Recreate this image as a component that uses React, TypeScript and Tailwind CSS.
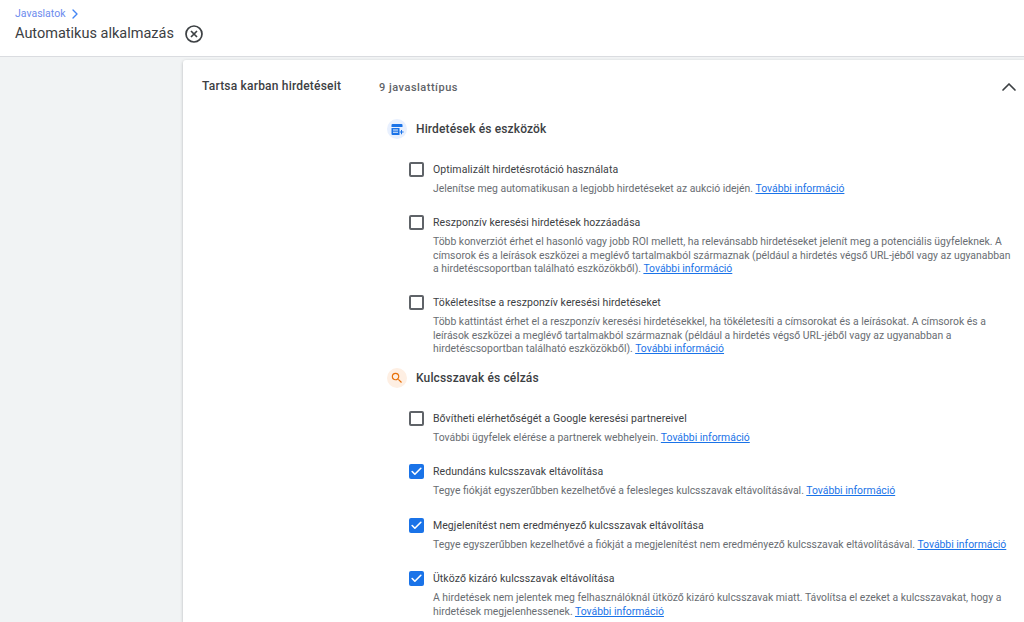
import { ChevronRight, ChevronUp, Check } from "lucide-react";

type Suggestion = {
  title: string;
  desc: string;
  checked?: boolean;
};

const adsItems: Suggestion[] = [
  {
    title: "Optimalizált hirdetésrotáció használata",
    desc: "Jelenítse meg automatikusan a legjobb hirdetéseket az aukció idején.",
  },
  {
    title: "Reszponzív keresési hirdetések hozzáadása",
    desc: "Több konverziót érhet el hasonló vagy jobb ROI mellett, ha relevánsabb hirdetéseket jelenít meg a potenciális ügyfeleknek. A címsorok és a leírások eszközei a meglévő tartalmakból származnak (például a hirdetés végső URL-jéből vagy az ugyanabban a hirdetéscsoportban található eszközökből).",
  },
  {
    title: "Tökéletesítse a reszponzív keresési hirdetéseket",
    desc: "Több kattintást érhet el a reszponzív keresési hirdetésekkel, ha tökéletesíti a címsorokat és a leírásokat. A címsorok és a leírások eszközei a meglévő tartalmakból származnak (például a hirdetés végső URL-jéből vagy az ugyanabban a hirdetéscsoportban található eszközökből).",
  },
];

const keywordItems: Suggestion[] = [
  {
    title: "Bővítheti elérhetőségét a Google keresési partnereivel",
    desc: "További ügyfelek elérése a partnerek webhelyein.",
  },
  {
    title: "Redundáns kulcsszavak eltávolítása",
    desc: "Tegye fiókját egyszerűbben kezelhetővé a felesleges kulcsszavak eltávolításával.",
    checked: true,
  },
  {
    title: "Megjelenítést nem eredményező kulcsszavak eltávolítása",
    desc: "Tegye egyszerűbben kezelhetővé a fiókját a megjelenítést nem eredményező kulcsszavak eltávolításával.",
    checked: true,
  },
  {
    title: "Ütköző kizáró kulcsszavak eltávolítása",
    desc: "A hirdetések nem jelentek meg felhasználóknál ütköző kizáró kulcsszavak miatt. Távolítsa el ezeket a kulcsszavakat, hogy a hirdetések megjelenhessenek.",
    checked: true,
  },
];

function SuggestionRow({ item }: { item: Suggestion }) {
  return (
    <div className="flex">
      {item.checked ? (
        <div className="flex h-[15px] w-[15px] shrink-0 items-center justify-center rounded-[2px] bg-[#1a73e8]">
          <Check size={13} strokeWidth={3} className="text-white" />
        </div>
      ) : (
        <div className="h-[15px] w-[15px] shrink-0 rounded-[2px] border-2 border-[#5f6368]" />
      )}
      <div className="ml-[9px] min-w-0 flex-1">
        <div className="h-[20px] text-[10.5px] leading-[16px] tracking-[0.065px] text-[#3c4043]">
          {item.title}
        </div>
        <div className="text-[10.4px] leading-[13.5px] text-[#696d72]">
          {item.desc}{" "}
          <a className="text-[#1a73e8] underline">További információ</a>
        </div>
      </div>
    </div>
  );
}

function SectionHeader({ title, kind }: { title: string; kind: "ads" | "keywords" }) {
  return (
    <div className="flex h-[20px] items-center">
      <div
        className={`flex h-[20px] w-[20px] items-center justify-center rounded-full ${
          kind === "ads" ? "bg-[#e8f0fe]" : "bg-[#feefe3]"
        }`}
      >
        {kind === "ads" ? (
          <svg width="13" height="13" viewBox="0 0 13 13" fill="#1a73e8">
            <path d="M1.5 1h9a1 1 0 0 1 1 1v2h-11V2a1 1 0 0 1 1-1z" />
            <path
              fillRule="evenodd"
              d="M.5 5h8v7h-7a1 1 0 0 1-1-1zM2 6.5v1h5v-1zM2 8.8v1h5v-1z"
            />
            <path d="M10 7h1v1.6h1.6v1H11v1.6h-1V9.6H8.8v-1H10z" />
          </svg>
        ) : (
          <svg width="14" height="14" viewBox="0 0 24 24" fill="#e8710a">
            <path d="M15.5 14h-.79l-.28-.27A6.471 6.471 0 0 0 16 9.5 6.5 6.5 0 1 0 9.5 16c1.61 0 3.09-.59 4.23-1.57l.27.28v.79l5 4.99L20.49 19l-4.99-5zm-6 0C7.01 14 5 11.99 5 9.5S7.01 5 9.5 5 14 7.01 14 9.5 11.99 14 9.5 14z" />
          </svg>
        )}
      </div>
      <div className="ml-[9px] text-[12px] font-medium tracking-[0.14px] text-[#3c4043]">{title}</div>
    </div>
  );
}

export default function App() {
  return (
    <div className="flex h-[622px] w-[1024px] flex-col overflow-hidden bg-[#f1f3f4] font-['Roboto',sans-serif]">
      <header className="h-[57px] shrink-0 border-b border-[#dadce0] bg-white pl-[15px] pt-[7px]">
        <div className="flex h-[13px] items-center text-[10.5px] text-[#6c8bee]">
          Javaslatok
          <ChevronRight size={16} strokeWidth={2} className="ml-[2px] text-[#4285f4]" />
        </div>
        <div className="mt-[4px] flex h-[20px] items-center text-[14.5px] text-[#3c4043]">
          Automatikus alkalmazás
          <svg width="18" height="18" viewBox="0 0 18 18" fill="none" stroke="#3c4043" strokeWidth="1.7" className="ml-[11px]">
            <circle cx="9" cy="9" r="8" />
            <path d="M6 6l6 6M12 6l-6 6" />
          </svg>
        </div>
      </header>
      <div className="flex flex-1 pl-[183px] pt-[3px]">
        <main className="flex flex-1 rounded-tl-[3px] bg-white pt-[18px] shadow-[0_1px_3px_rgba(60,64,67,0.35)]">
          <div className="w-[196px] shrink-0 pl-[19px] text-[12px] font-medium leading-[16px] tracking-[0.2px] text-[#3c4043]">
            Tartsa karban hirdetéseit
          </div>
          <div className="min-w-0 flex-1 pt-[2px]">
            <div className="flex h-[16px] items-center justify-between pr-[3px] text-[11px] font-medium tracking-[0.5px] text-[#5f6368]">
              9 javaslattípus
              <ChevronUp size={24} strokeWidth={1.7} className="-mt-[2px] text-[#3c4043]" />
            </div>
            <div className="pl-[8px] pt-[23px]">
              <SectionHeader title="Hirdetések és eszközök" kind="ads" />
              <div className="flex flex-col gap-[19.5px] pb-[12px] pl-[22px] pr-[8px] pt-[23px]">
                {adsItems.map((item) => (
                  <SuggestionRow key={item.title} item={item} />
                ))}
              </div>
              <SectionHeader title="Kulcsszavak és célzás" kind="keywords" />
              <div className="flex flex-col gap-[20px] pl-[22px] pr-[8px] pt-[23px]">
                {keywordItems.map((item) => (
                  <SuggestionRow key={item.title} item={item} />
                ))}
              </div>
            </div>
          </div>
        </main>
      </div>
    </div>
  );
}
